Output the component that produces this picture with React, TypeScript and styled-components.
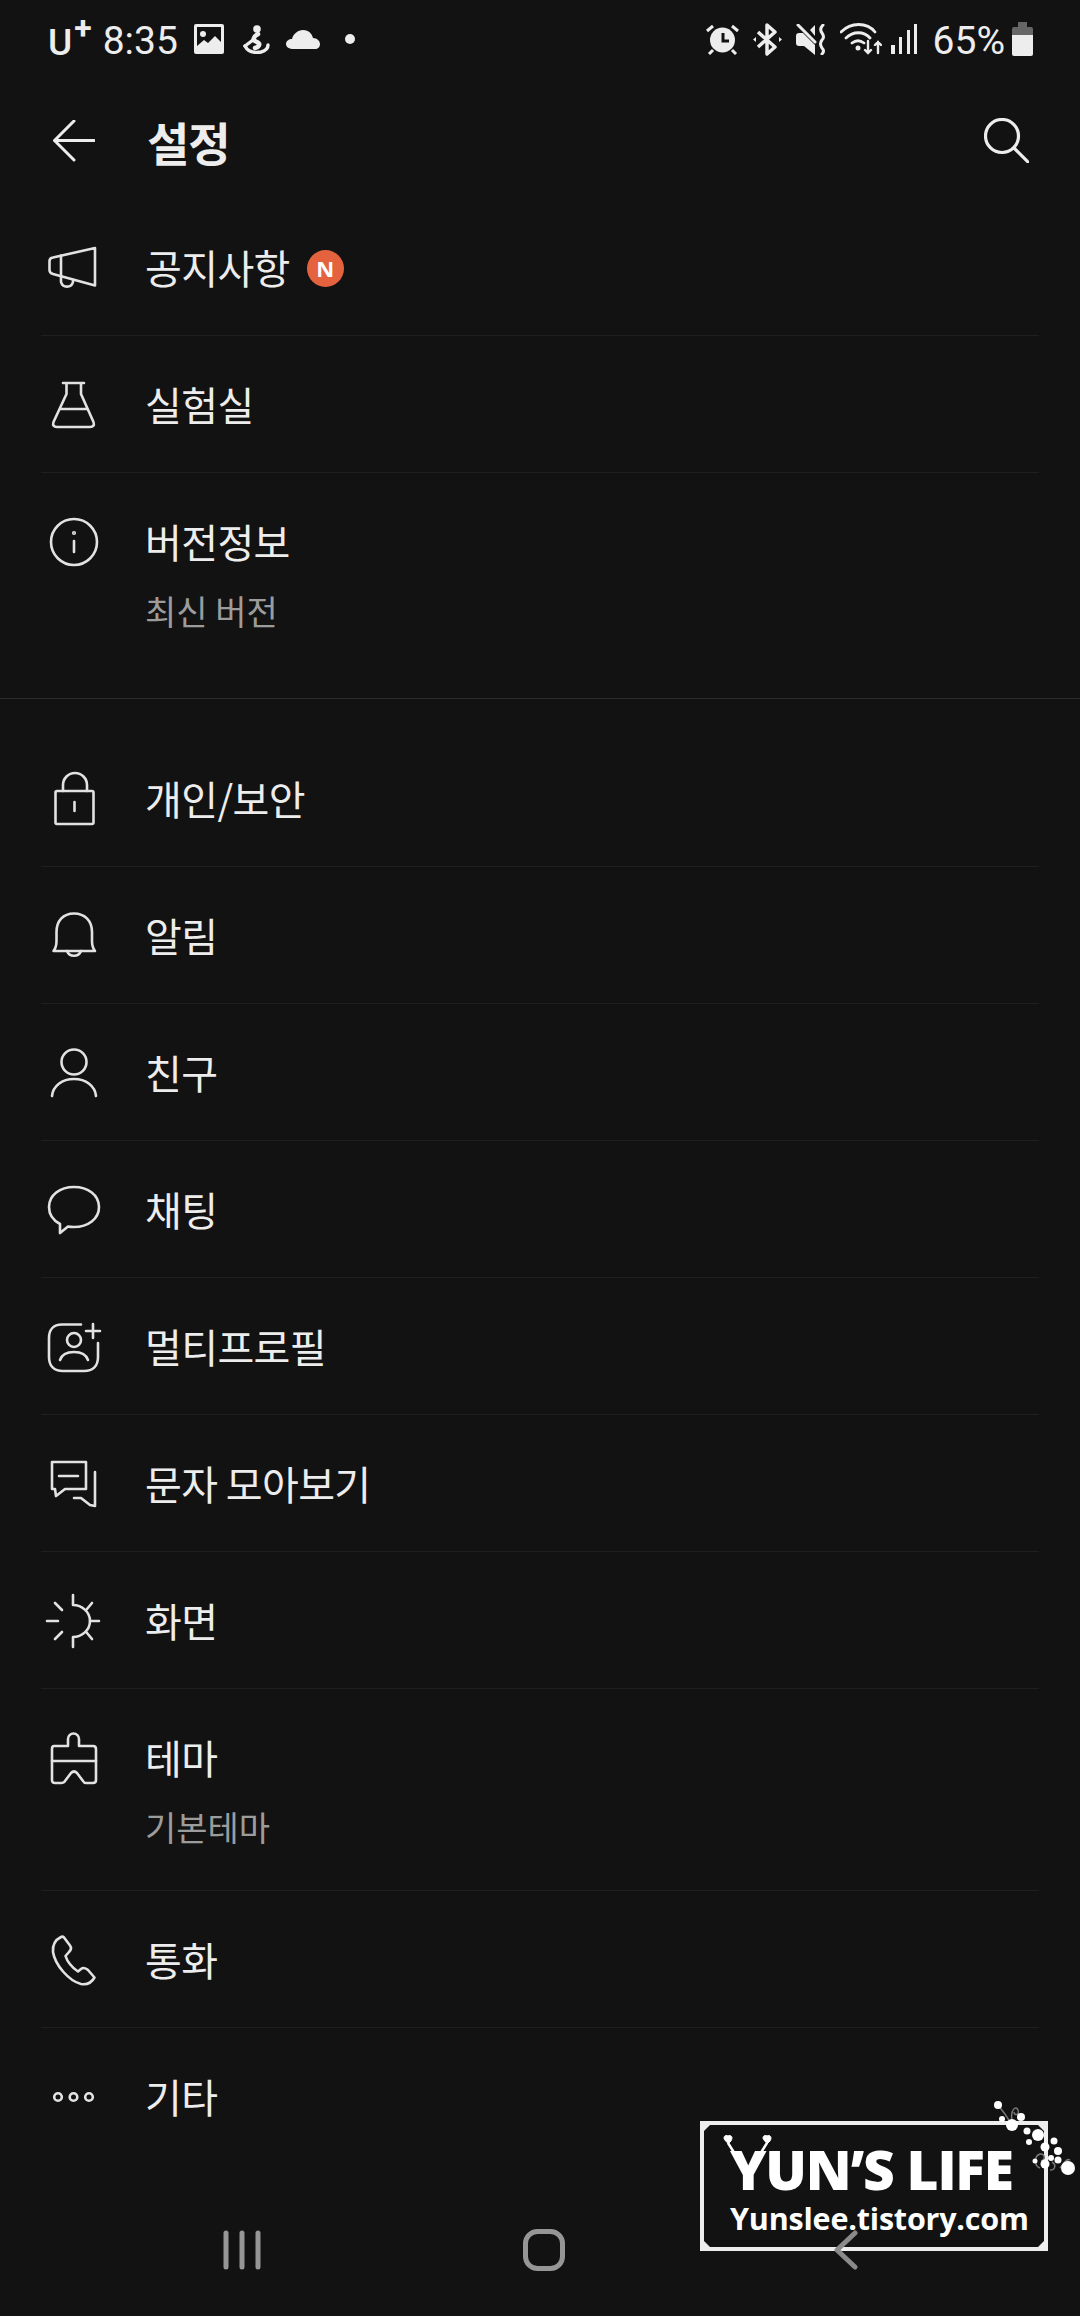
import React from "react";
import styled, { createGlobalStyle } from "styled-components";

const bg = "#121212";
const ink = "#ededed";
const iconInk = "#e2e2e2";

const GlobalStyle = createGlobalStyle`
  html, body {
    margin: 0;
    padding: 0;
    background: ${bg};
  }
`;

const Page = styled.div`
  position: relative;
  width: 1080px;
  height: 2316px;
  display: flex;
  flex-direction: column;
  overflow: hidden;
  background: ${bg};
  color: ${ink};
  font-family: "Noto Sans CJK KR", "Noto Sans", sans-serif;
`;

const StatusBar = styled.div`
  height: 78px;
  display: flex;
  align-items: center;
  justify-content: space-between;
  padding: 0 47px 0 48px;
  font-family: Roboto, sans-serif;
  font-size: 39px;
  font-weight: 400;
  color: ${ink};
`;

const StatusGroup = styled.div`
  display: flex;
  align-items: center;
  gap: ${(p: { $gap: number }) => p.$gap}px;
`;

const Carrier = styled.span`
  font-size: 37px;
  font-weight: 500;
  line-height: 40px;
  position: relative;
  top: 4px;
  margin-right: -6px;
  sup {
    font-size: 32px;
    font-weight: 700;
    line-height: 0;
    position: relative;
    top: -4px;
    vertical-align: 12px;
    margin-left: 2px;
  }
`;

const StatusText = styled.span<{ $pull?: number }>`
  line-height: 40px;
  position: relative;
  top: 2px;
  margin-right: ${(p) => p.$pull ?? 0}px;
`;

const Glyph = styled.svg<{ $pull?: number }>`
  display: block;
  flex: none;
  color: ${ink};
  margin-right: ${(p) => p.$pull ?? 0}px;
`;

const AppBar = styled.div`
  height: 121px;
  padding: 4px 51px 0 53px;
  box-sizing: border-box;
  display: flex;
  align-items: center;
`;

const BarTitle = styled.h1`
  flex: 1;
  margin: 0 0 0 52px;
  font-size: 46px;
  line-height: 56px;
  font-weight: 700;
  letter-spacing: -1px;
`;

const Section = styled.section`
  padding: ${(p: { $top: number; $bottom: number }) => `${p.$top}px 0 ${p.$bottom}px`};
`;

const SectionRule = styled.hr`
  margin: 0;
  border: 0;
  height: 1px;
  background: #2b2b2b;
`;

const Row = styled.div<{ $hasSub?: boolean; $last?: boolean }>`
  margin: 0 41px;
  padding: 45px 0 ${(p) => (p.$hasSub ? 40 : 43)}px;
  display: flex;
  align-items: flex-start;
  border-bottom: ${(p) => (p.$last ? "none" : "1px solid #1f1f1f")};
`;

const IconSlot = styled.div`
  width: 66px;
  height: 48px;
  flex: none;
  display: flex;
  justify-content: center;
`;

const LineIcon = styled.svg.attrs({ viewBox: "0 0 48 48", fill: "none" })`
  display: block;
  width: 48px;
  height: 48px;
  overflow: visible;
  stroke: ${iconInk};
  stroke-width: 2.6;
  stroke-linecap: round;
  stroke-linejoin: round;
`;

const RowText = styled.div`
  margin-left: 38px;
  display: flex;
  flex-direction: column;
`;

const LabelLine = styled.div`
  display: flex;
  align-items: center;
  gap: 17px;
  height: 48px;
`;

const Label = styled.span`
  font-size: 40px;
  line-height: 48px;
  letter-spacing: -0.6px;
  color: ${ink};
  position: relative;
  top: -1px;
`;

const Sub = styled.span`
  margin-top: 22px;
  font-size: 34px;
  line-height: 46px;
  color: #9c9c9c;
`;

const NewBadge = styled.span`
  width: 37px;
  height: 37px;
  border-radius: 50%;
  background: #e5623f;
  color: #fff;
  font-family: "Open Sans", sans-serif;
  font-size: 22px;
  font-weight: 700;
  display: flex;
  align-items: center;
  justify-content: center;
`;

const NavBar = styled.nav`
  position: relative;
  z-index: 2;
  margin-top: auto;
  height: 132px;
  padding-left: 8px;
  display: grid;
  grid-template-columns: repeat(3, 302px);
  justify-content: center;
  align-items: center;
  justify-items: center;
`;

const Watermark = styled.div`
  position: absolute;
  left: 700px;
  top: 2121px;
  width: 348px;
  height: 130px;
  box-sizing: border-box;
  border: 4px solid #eeeeee;
  background: ${bg};
  color: #fff;
  font-family: "Open Sans", sans-serif;
  display: flex;
  flex-direction: column;
  padding: 15px 0 0 26px;
`;

const MarkCorner = styled.i<{ $right?: boolean; $bottom?: boolean }>`
  position: absolute;
  width: 6px;
  height: 6px;
  background: #eeeeee;
  ${(p) => (p.$right ? "right: 0;" : "left: 0;")}
  ${(p) => (p.$bottom ? "bottom: 0;" : "top: 0;")}
  clip-path: polygon(
    ${(p) =>
      p.$right
        ? p.$bottom
          ? "100% 0, 100% 100%, 0 100%"
          : "0 0, 100% 0, 100% 100%"
        : p.$bottom
        ? "0 0, 100% 100%, 0 100%"
        : "0 0, 100% 0, 0 100%"}
  );
`;

const MarkTitle = styled.div`
  font-size: 55px;
  line-height: 58px;
  font-weight: 800;
  letter-spacing: -1.2px;
  white-space: nowrap;
`;

const MarkUrl = styled.div`
  margin-top: 1px;
  font-size: 30.5px;
  line-height: 38px;
  font-weight: 700;
  letter-spacing: -0.2px;
  white-space: nowrap;
`;

const MarkSprig = styled.svg`
  position: absolute;
  left: 286px;
  top: -30px;
  overflow: visible;
`;

const MarkHearts = styled.svg`
  position: absolute;
  left: 18px;
  top: 10px;
  overflow: visible;
`;

const Megaphone = () => (
  <LineIcon>
    <path d="M45 4V41.5L3 30Q-0.5 29-0.5 26V17Q-0.5 14 3 13.5Z" />
    <path d="M11 11.5V32M11 33V38A6.2 6.2 0 0 0 23 38V36" />
  </LineIcon>
);

const Flask = () => (
  <LineIcon>
    <path d="M13 2H34M16.5 2V13L3.5 41Q2 46 7 46H40Q45 46 43.5 41L31 13V2M10 28H37" />
  </LineIcon>
);

const Info = () => (
  <LineIcon>
    <circle cx="24" cy="24" r="23" />
    <path d="M24 23V34" />
    <circle cx="24" cy="15" r="0.8" />
  </LineIcon>
);

const Lock = () => (
  <LineIcon>
    <rect x="5.5" y="16" width="38" height="33" rx="1.5" />
    <path d="M13 16V10A11.5 11.5 0 0 1 37 10V16M24.500 27V36" />
  </LineIcon>
);

const Bell = () => (
  <LineIcon>
    <path d="M3.500 39C6 36 6.500 33 6.500 29V20C6.500 9 13 1.500 24 1.500C35 1.500 42 9 42 20V29C42 33 42.500 36 45 39Z" />
    <path d="M17 39A7.500 7.500 0 0 0 31 39" />
  </LineIcon>
);

const Person = () => (
  <LineIcon>
    <circle cx="24" cy="13" r="12.500" />
    <path d="M2 47C3 37 12 30 24 30C36 30 45 37 46 47" />
  </LineIcon>
);

const Bubble = () => (
  <LineIcon>
    <path d="M10 38C2.500 34-1 28-1 21C-1 9 10 1 24 1C38 1 49 9 49 21C49 33 38 41 24 41C22 41 20 41 18 40.500L10 47Z" />
  </LineIcon>
);

const MultiProfile = () => (
  <LineIcon>
    <path d="M31 1.500H12C3 1.500-1 7-1 15V34C-1 43 4 48 13 48H34C43 48 48 43 48 34V20" />
    <path d="M43 1V15M36 8H50" />
    <circle cx="24" cy="17" r="7" />
    <path d="M10 37C12 31 18 29 24 29C30 29 36 31 38 37" />
  </LineIcon>
);

const Messages = () => (
  <LineIcon>
    <path d="M2 2H36V29H15L6 36L5 29H2Z" />
    <path d="M9 16H28M24 38H31L40 45L45 46V12" />
  </LineIcon>
);

const Sun = () => (
  <LineIcon>
    <path d="M23-2V8C32 8 40 15 40 24C40 33 32 40 23 40V50" />
    <path d="M40 24H49M37 12L42 6M37 36L42 42M-3 24H8M5 6L12 13M5 42L12 35" />
  </LineIcon>
);

const Brush = () => (
  <LineIcon>
    <path d="M4 12H18V5A5.500 5.500 0 0 1 29 5V12H43Q46 12 46 15V46Q46 49 43 49H36Q34 49 33 47L27 39Q24 36 21 39L15 47Q14 49 11 49H5Q2 49 2 46V15Q2 12 4 12Z" />
    <path d="M2 27H46" />
  </LineIcon>
);

const Phone = () => (
  <LineIcon>
    <path d="M11 1C5 4 2.500 10 3 16C5 29 19 45 31 48C37 49 42 46 44.500 41.500L38 34C36 32 33 31.500 31 33L28 35.500C22 32 17 25 15.500 20L19 16C21 14 21.500 11.500 20 9.500L14 1.500C13 0.500 12 0.500 11 1Z" />
  </LineIcon>
);

const Dots = () => (
  <LineIcon>
    <circle cx="8" cy="24" r="3.800" />
    <circle cx="23.500" cy="24" r="3.800" />
    <circle cx="39" cy="24" r="3.800" />
  </LineIcon>
);

type Item = { icon: React.ReactNode; label: string; sub?: string; badge?: boolean };

const infoItems: Item[] = [
  { icon: <Megaphone />, label: "공지사항", badge: true },
  { icon: <Flask />, label: "실험실" },
  { icon: <Info />, label: "버전정보", sub: "최신 버전" },
];

const settingItems: Item[] = [
  { icon: <Lock />, label: "개인/보안" },
  { icon: <Bell />, label: "알림" },
  { icon: <Person />, label: "친구" },
  { icon: <Bubble />, label: "채팅" },
  { icon: <MultiProfile />, label: "멀티프로필" },
  { icon: <Messages />, label: "문자 모아보기" },
  { icon: <Sun />, label: "화면" },
  { icon: <Brush />, label: "테마", sub: "기본테마" },
  { icon: <Phone />, label: "통화" },
  { icon: <Dots />, label: "기타" },
];

const renderRows = (items: Item[]) =>
  items.map((item, i) => (
    <Row key={item.label} $hasSub={!!item.sub} $last={i === items.length - 1}>
      <IconSlot>{item.icon}</IconSlot>
      <RowText>
        <LabelLine>
          <Label>{item.label}</Label>
          {item.badge && <NewBadge>N</NewBadge>}
        </LabelLine>
        {item.sub && <Sub>{item.sub}</Sub>}
      </RowText>
    </Row>
  ));

const sprigDots = [
  [998, 2105, 4],
  [1002, 2119, 3],
  [1012, 2125, 6],
  [1021, 2117, 4],
  [1027, 2131, 3.5],
  [1038, 2135, 6],
  [1029, 2142, 3],
  [1045, 2147, 4.5],
  [1054, 2141, 3.5],
  [1058, 2151, 4],
  [1051, 2158, 3],
  [1058, 2160, 3.5],
  [1035, 2161, 2.5],
  [1045, 2164, 4.5],
  [1068, 2168, 7],
];

export default function App() {
  return (
    <Page>
      <GlobalStyle />
      <StatusBar>
        <StatusGroup $gap={17}>
          <Carrier>
            U<sup>+</sup>
          </Carrier>
          <StatusText $pull={-1}>8:35</StatusText>
          <Glyph $pull={2} width="30" height="30" viewBox="0 0 30 30">
            <rect width="30" height="30" rx="2" fill="currentColor" />
            <rect x="3" y="3" width="24" height="24" fill={bg} />
            <circle cx="9" cy="10" r="3" fill="currentColor" />
            <path d="M3 27V22L10 16L14 19L21 12L27 18V27Z" fill="currentColor" />
          </Glyph>
          <Glyph $pull={-1} width="27" height="29" viewBox="0 0 27 29" fill="none" stroke="currentColor" strokeWidth="3.400" strokeLinecap="round">
            <circle cx="14" cy="4" r="3.800" fill="currentColor" stroke="none" />
            <path d="M15 9C10 12 9 15 14 17C18 19 16 22 12 23" strokeWidth="4.500" />
            <path d="M2 21C5 27 12 28 18 27C22 26 25 24 25 20" />
            <path d="M2 21L10 15" />
          </Glyph>
          <Glyph $pull={8} width="34" height="20" viewBox="0 0 34 20">
            <path d="M8 20C3 20 0 18 0 15C0 12 3 10 6 10C7 5 12 1 17 1C23 1 26 5 27 9C31 9 34 12 34 15C34 18 32 20 29 20Z" fill="currentColor" />
          </Glyph>
          <Glyph width="10" height="10" viewBox="0 0 10 10">
            <circle cx="5" cy="5" r="5" fill="currentColor" />
          </Glyph>
        </StatusGroup>
        <StatusGroup $gap={14}>
          <Glyph width="33" height="31" viewBox="0 0 33 31" fill="none" stroke="currentColor" strokeWidth="3">
            <circle cx="16.500" cy="16" r="12.500" fill="currentColor" stroke="none" />
            <path d="M17 9V17H23" stroke={bg} />
            <path d="M1 7L7 2M26 2L32 7M7 26L3 30M26 26L30 30" />
          </Glyph>
          <Glyph width="29" height="33" viewBox="0 0 29 33" fill="none" stroke="currentColor" strokeWidth="3.500">
            <path d="M5 9L22 24L14 31V2L22 9L5 24" strokeLinejoin="round" />
            <path d="M0 16.500L3 14V19ZM29 16.500L26 14V19Z" fill="currentColor" stroke="none" />
          </Glyph>
          <Glyph width="30" height="31" viewBox="0 0 30 31" fill="none" stroke="currentColor" strokeWidth="3" strokeLinecap="round">
            <path d="M0 12Q0 9 3 9H7L19 21V31L8 22H3Q0 22 0 19Z" fill="currentColor" stroke="none" />
            <path d="M2 1L19 18" />
            <path d="M14 6L19 1V12Z" fill="currentColor" stroke="none" />
            <path d="M27 1Q23 5 26 9Q29 13 26 16Q23 20 26 24Q29 27 26 30" />
          </Glyph>
          <Glyph $pull={-5} width="42" height="32" viewBox="0 0 42 32" fill="none" stroke="currentColor" strokeWidth="2.800" strokeLinecap="round">
            <path d="M1 9C11-1 27-1 35 9M6 15C13 8 24 8 30 15M12 20C16 17 20 17 24 20" />
            <circle cx="18" cy="25" r="2.500" fill="currentColor" stroke="none" />
            <path d="M28 18V30M25 27L28 30L31 27M38 30V19M35 22L38 19L41 22" strokeWidth="2.400" />
          </Glyph>
          <Glyph $pull={2} width="26" height="30" viewBox="0 0 26 30" fill="currentColor">
            <rect x="0" y="21" width="4" height="9" />
            <rect x="8" y="13" width="3" height="17" />
            <rect x="16" y="6" width="3" height="24" />
            <rect x="23" y="0" width="3" height="30" />
          </Glyph>
          <StatusText $pull={-7}>65%</StatusText>
          <Glyph width="21" height="34" viewBox="0 0 21 34">
            <rect x="6" y="0" width="9" height="6" fill="#666" />
            <rect x="0" y="5" width="21" height="10" rx="2" fill="#666" />
            <path d="M0 13H21V32Q21 34 19 34H2Q0 34 0 32Z" fill="currentColor" />
          </Glyph>
        </StatusGroup>
      </StatusBar>

      <AppBar>
        <Glyph width="42" height="42" viewBox="0 0 42 42" fill="none" stroke="currentColor" strokeWidth="3" strokeLinecap="round">
          <path d="M1.500 20.500H41M21 1L1.500 20.500L21 40" strokeLinejoin="round" />
        </Glyph>
        <BarTitle>설정</BarTitle>
        <Glyph width="45" height="45" viewBox="0 0 45 45" fill="none" stroke="currentColor" strokeWidth="3.200" strokeLinecap="round">
          <circle cx="18" cy="18" r="16.500" />
          <path d="M30 30L44 44" />
        </Glyph>
      </AppBar>

      <Section $top={0} $bottom={24}>
        {renderRows(infoItems)}
      </Section>
      <SectionRule />
      <Section $top={31} $bottom={0}>
        {renderRows(settingItems)}
      </Section>

      <Watermark>
        <MarkCorner />
        <MarkCorner $right />
        <MarkCorner $bottom />
        <MarkCorner $right $bottom />
        <MarkTitle>YUN’S LIFE</MarkTitle>
        <MarkUrl>Yunslee.tistory.com</MarkUrl>
        <MarkHearts width="50" height="22" viewBox="0 0 50 22" fill="#fff" stroke="#fff">
          <path d="M5 7C0 4 2-1 6 1C10-1 12 4 7 8L6 9Z" />
          <path d="M44 7C39 4 41-1 45 1C49-1 51 4 46 8L45 9Z" />
          <path d="M6 8L13 19M45 8L38 19" strokeWidth="2.500" />
        </MarkHearts>
        <MarkSprig width="90" height="85" viewBox="990 2095 90 85">
          <path
            d="M998 2105C1004 2112 1008 2118 1012 2125M1012 2120C1010 2110 1016 2105 1018 2110C1020 2115 1014 2116 1014 2112M1040 2168C1034 2166 1034 2156 1040 2154C1045 2153 1046 2160 1041 2161M1050 2170C1056 2170 1056 2164 1052 2162M1060 2168C1064 2164 1066 2158 1070 2160"
            fill="none"
            stroke="#777"
            strokeWidth="1.500"
          />
          {sprigDots.map(([cx, cy, r]) => (
            <circle key={`${cx}-${cy}`} cx={cx} cy={cy} r={r} fill="#fff" />
          ))}
        </MarkSprig>
      </Watermark>

      <NavBar>
        <Glyph width="38" height="40" viewBox="0 0 38 40" fill="none" stroke="#969696" strokeWidth="5" strokeLinecap="round">
          <path d="M3 3V37M19 3V37M35 3V37" />
        </Glyph>
        <Glyph width="42" height="42" viewBox="0 0 42 42" fill="none" stroke="#969696" strokeWidth="5">
          <rect x="2.500" y="2.500" width="37" height="37" rx="12" />
        </Glyph>
        <Glyph width="24" height="40" viewBox="0 0 24 40" fill="none" stroke="#8a8a8a" strokeWidth="5" strokeLinecap="round" strokeLinejoin="round">
          <path d="M21 3L3 20L21 37" />
        </Glyph>
      </NavBar>
    </Page>
  );
}
